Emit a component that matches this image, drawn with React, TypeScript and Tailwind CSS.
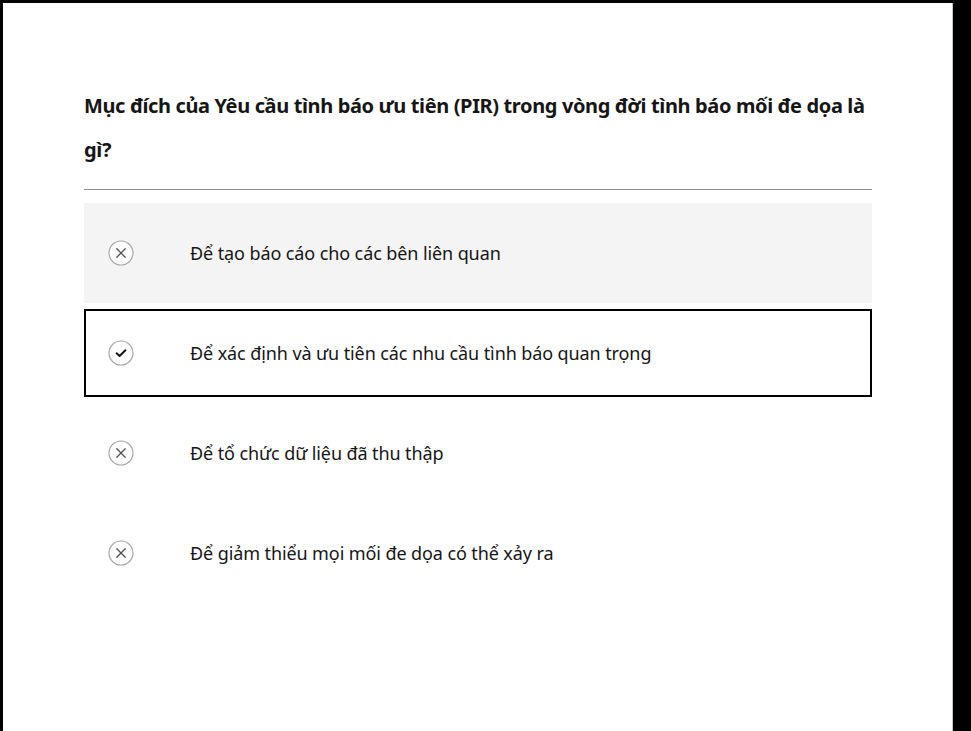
import React from "react";

const font = { fontFamily: '"Noto Sans", "Open Sans", Arial, sans-serif' };

function XIcon() {
  return (
    <svg width="26" height="26" viewBox="0 0 26 26" fill="none">
      <circle cx="13" cy="13" r="12" stroke="#a8a8a8" strokeWidth="1.2" fill="white" />
      <path d="M8.8 8.8 L17.2 17.2 M17.2 8.8 L8.8 17.2" stroke="#525252" strokeWidth="1.3" strokeLinecap="round" />
    </svg>
  );
}

function CheckIcon() {
  return (
    <svg width="26" height="26" viewBox="0 0 26 26" fill="none">
      <circle cx="13" cy="13" r="12" stroke="#a8a8a8" strokeWidth="1.2" fill="white" />
      <path d="M8.6 13.2 L11.6 16 L17.4 10.2" stroke="#161616" strokeWidth="2" strokeLinecap="round" strokeLinejoin="round" />
    </svg>
  );
}

const options = [
  { text: "Để tạo báo cáo cho các bên liên quan", kind: "hover" },
  { text: "Để xác định và ưu tiên các nhu cầu tình báo quan trọng", kind: "selected" },
  { text: "Để tổ chức dữ liệu đã thu thập", kind: "plain" },
  { text: "Để giảm thiểu mọi mối đe dọa có thể xảy ra", kind: "plain" },
];

export default function App() {
  return (
    <div className="w-[971px] h-[731px] bg-black overflow-hidden pt-[3px] pl-[3px]">
      <div className="w-[950px] h-[728px] bg-white border-r border-[#c6c6c6] pl-[81px] pt-[81px]" style={font}>
        <div className="w-[788px]">
          <h1 className="text-[20px] font-bold leading-[44px] text-[#161616] tracking-[-0.37px]">
            <span className="whitespace-nowrap">Mục đích của Yêu cầu tình báo ưu tiên (PIR) trong vòng đời tình báo mối đe dọa là</span>
            <br />
            gì?
          </h1>
          <div className="mt-[17px] h-px bg-[#8d8d8d]" />
          <div className="mt-[13px] flex flex-col">
            {options.map((o, i) =>
              o.kind === "selected" ? (
                <div key={i} className="my-[6px] h-[88px] border-2 border-black flex items-center">
                  <div className="w-[104px] pl-[22px] flex items-center">
                    <CheckIcon />
                  </div>
                  <span className="text-[18px] text-[#161616] tracking-[-0.1px]">{o.text}</span>
                </div>
              ) : (
                <div
                  key={i}
                  className={
                    o.kind === "hover"
                      ? "h-[100px] bg-[#f4f4f4] flex items-center pl-[2px]"
                      : "h-[100px] flex items-center pl-[2px]"
                  }
                >
                  <div className="w-[104px] pl-[22px] flex items-center">
                    <XIcon />
                  </div>
                  <span className="text-[18px] text-[#161616] tracking-[-0.1px]">{o.text}</span>
                </div>
              )
            )}
          </div>
        </div>
      </div>
    </div>
  );
}
